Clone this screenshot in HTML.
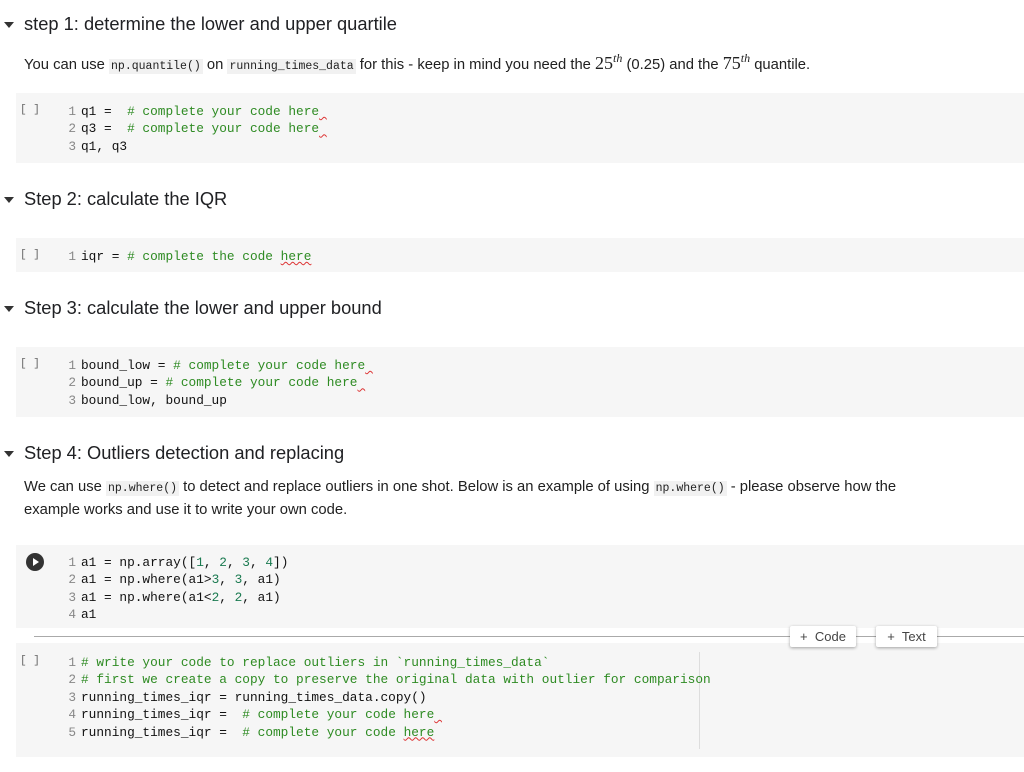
<!DOCTYPE html>
<html><head><meta charset="utf-8"><style>
*{margin:0;padding:0;box-sizing:border-box}
body{width:1024px;height:772px;background:#fff;position:relative;overflow:hidden;font-family:"Liberation Sans",Arial,sans-serif;color:#212121}
.abs{position:absolute;white-space:nowrap}
.h{font-size:18.3px;color:#202124;left:24px}
.tri{position:absolute;left:4px;width:0;height:0;border-left:5px solid transparent;border-right:5px solid transparent;border-top:6px solid #333}
.p{font-size:14.8px;left:24px;color:#212121}
.ic{font-family:"Liberation Mono",monospace;font-size:11.5px;background:#f1f1f1;padding:1px 2px}
.cell{position:absolute;left:16px;right:0;background:#f6f6f6}
.br{position:absolute;left:20px;font-family:"Liberation Mono",monospace;font-size:11px;color:#666}
.code{position:absolute;left:58px;font-family:"Liberation Mono",monospace;font-size:12.8px;line-height:17.4px;color:#111;white-space:pre}
.n{color:#888;display:inline-block;width:18px;text-align:right;margin-right:5px}
.c{color:#2e8b23}
.g{color:#1a7a50}
.sq{text-decoration:underline wavy #d33;text-decoration-thickness:1px}
.btn{position:absolute;top:626px;height:21px;background:#fff;box-shadow:0 1px 3px rgba(0,0,0,.35);font-size:13px;color:#444;line-height:21px;text-align:center;border-radius:2px}
</style></head><body>
<div class="tri" style="top:22px"></div>
<div class="abs h" style="top:13px">step 1: determine the lower and upper quartile</div>
<div class="abs p" style="top:51px">You can use <span class="ic">np.quantile()</span> on <span class="ic">running_times_data</span> for this - keep in mind you need the <span style="font-family:'Liberation Serif',serif;font-size:18px">25<sup style="font-size:12px;font-style:italic">th</sup></span> (0.25) and the <span style="font-family:'Liberation Serif',serif;font-size:18px">75<sup style="font-size:12px;font-style:italic">th</sup></span> quantile.</div>

<div class="cell" style="top:93px;height:70px"></div>
<div class="br" style="top:104px">[ ]</div>
<div class="code" style="top:103px"><span class="n">1</span>q1 =  <span class="c"># complete your code here</span><span class="sq"> </span>
<span class="n">2</span>q3 =  <span class="c"># complete your code here</span><span class="sq"> </span>
<span class="n">3</span>q1, q3</div>

<div class="tri" style="top:197px"></div>
<div class="abs h" style="top:188px">Step 2: calculate the IQR</div>
<div class="cell" style="top:238px;height:34px"></div>
<div class="br" style="top:249px">[ ]</div>
<div class="code" style="top:248px"><span class="n">1</span>iqr = <span class="c"># complete the code <span class="sq">here</span></span></div>

<div class="tri" style="top:306px"></div>
<div class="abs h" style="top:297px">Step 3: calculate the lower and upper bound</div>
<div class="cell" style="top:347px;height:70px"></div>
<div class="br" style="top:358px">[ ]</div>
<div class="code" style="top:357px"><span class="n">1</span>bound_low = <span class="c"># complete your code here</span><span class="sq"> </span>
<span class="n">2</span>bound_up = <span class="c"># complete your code here</span><span class="sq"> </span>
<span class="n">3</span>bound_low, bound_up</div>

<div class="tri" style="top:451px"></div>
<div class="abs h" style="top:442px">Step 4: Outliers detection and replacing</div>
<div class="abs p" style="top:479px">We can use <span class="ic">np.where()</span> to detect and replace outliers in one shot. Below is an example of using <span class="ic">np.where()</span> - please observe how the</div>
<div class="abs p" style="top:502px">example works and use it to write your own code.</div>

<div class="cell" style="top:545px;height:83px"></div>
<div style="position:absolute;left:26px;top:553px;width:18px;height:18px;border-radius:50%;background:#333"></div>
<div style="position:absolute;left:33px;top:558px;border-top:4px solid transparent;border-bottom:4px solid transparent;border-left:6px solid #fff"></div>
<div class="code" style="top:554px"><span class="n">1</span>a1 = np.array([<span class="g">1</span>, <span class="g">2</span>, <span class="g">3</span>, <span class="g">4</span>])
<span class="n">2</span>a1 = np.where(a1&gt;<span class="g">3</span>, <span class="g">3</span>, a1)
<span class="n">3</span>a1 = np.where(a1&lt;<span class="g">2</span>, <span class="g">2</span>, a1)
<span class="n">4</span>a1</div>

<div style="position:absolute;left:34px;right:0;top:636px;height:1px;background:#aaa"></div>
<div class="cell" style="top:643px;height:114px"></div>
<div style="position:absolute;left:699px;top:652px;width:1px;height:97px;background:#ddd"></div>
<div class="btn" style="left:790px;width:66px">+&nbsp; Code</div>
<div class="btn" style="left:876px;width:61px">+&nbsp; Text</div>
<div class="br" style="top:655px">[ ]</div>
<div class="code" style="top:654px"><span class="n">1</span><span class="c"># write your code to replace outliers in `running_times_data`</span>
<span class="n">2</span><span class="c"># first we create a copy to preserve the original data with outlier for comparison</span>
<span class="n">3</span>running_times_iqr = running_times_data.copy()
<span class="n">4</span>running_times_iqr =  <span class="c"># complete your code here</span><span class="sq"> </span>
<span class="n">5</span>running_times_iqr =  <span class="c"># complete your code <span class="sq">here</span></span></div>
</body></html>
